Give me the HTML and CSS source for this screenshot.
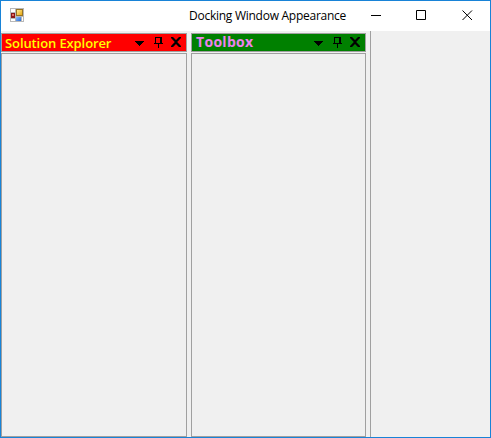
FILE: index.html
```html
<!DOCTYPE html>
<html lang="en">
<head>
<meta charset="utf-8">
<title>Docking Window Appearance</title>
<link rel="stylesheet" href="styles.css">
</head>
<body>
<svg class="defs" width="0" height="0">
  <symbol id="caret" viewBox="0 0 9 5"><path d="M0 0h9v1H8v1H7v1H6v1H5v1H4V4H3V3H2V2H1V1H0z"/></symbol>
  <symbol id="pin" viewBox="0 0 9 11"><path fill-rule="evenodd" d="M1 0h7v6h1v1H5v4H4V7H0V6h1zM2 1v5h4V1z"/></symbol>
  <symbol id="cross" viewBox="0 0 10 10"><path d="M0 0h2l3 3 3-3h2v1L6.200 5 10 9v1H8L5 7l-3 3H0V9l3.800-4L0 1z"/></symbol>
</svg>
<div class="window">
  <header class="titlebar">
    <svg class="app-icon" width="14" height="14" shape-rendering="crispEdges">
      <defs>
        <linearGradient id="gold" x2="1" y2="1"><stop stop-color="#ffeb93"/><stop offset="1" stop-color="#e6a712"/></linearGradient>
        <linearGradient id="blue" x2="1" y2="1"><stop stop-color="#8dbcfa"/><stop offset="1" stop-color="#286bd5"/></linearGradient>
      </defs>
      <path fill="#b8b8b8" d="M0 0h14v14H0z"/>
      <path fill="#fff" d="M1 1h4v3H1zM1 11h4v2H1zM12 9h1v4h-1z"/>
      <path fill="#977323" d="M6 1h7v7H6z"/><path fill="url(#gold)" d="M7 2h5v5H7z"/>
      <path fill="#8a1717" d="M1 5h4v5H1z"/><path fill="#e06b63" d="M2 6h2v2H2z"/>
      <path fill="url(#blue)" d="M6 9h5v4H6z"/>
    </svg>
    <h1 class="caption">Docking Window Appearance</h1>
    <svg class="controls" width="104" height="12" fill="none" stroke="#000">
      <path d="M0 5.500h10M45.500 .5h9v9h-9z"/>
      <path d="M91.500 .5l9.500 9.500M101 .5L91.500 10"/>
    </svg>
  </header>
  <main class="workspace">
    <section class="dock explorer">
      <div class="dock-head"><h2>Solution Explorer</h2>
        <svg class="caret" width="9" height="5"><use href="#caret"/></svg>
        <svg class="pin" width="9" height="11"><use href="#pin"/></svg>
        <svg class="cross" width="10" height="10"><use href="#cross"/></svg>
      </div>
      <div class="dock-body"></div>
    </section>
    <section class="dock toolbox">
      <div class="dock-head"><h2>Toolbox</h2>
        <svg class="caret" width="9" height="5"><use href="#caret"/></svg>
        <svg class="pin" width="9" height="11"><use href="#pin"/></svg>
        <svg class="cross" width="10" height="10"><use href="#cross"/></svg>
      </div>
      <div class="dock-body"></div>
    </section>
    <div class="splitter"></div>
    <div class="client"></div>
  </main>
</div>
</body>
</html>
```
FILE: styles.css
```css
* { box-sizing: border-box; }
body { margin: 0; }
h1, h2 { margin: 0; white-space: nowrap; }
.defs { display: none; }
.window {
  width: 491px;
  height: 438px;
  border: 1px solid #1883d7;
  background: #f0f0f0;
  display: flex;
  flex-direction: column;
}
.titlebar {
  height: 30px;
  flex: none;
  display: flex;
  align-items: flex-start;
  background: #fff;
  padding-left: 9px;
}
.app-icon { margin-top: 7px; flex: none; }
.caption {
  margin: 6px 0 0 165px;
  width: 182px;
  flex: none;
  font: 400 12px/18px "Open Sans", sans-serif;
  letter-spacing: -0.26px;
  color: #000;
}
.controls { margin-top: 9px; flex: none; }
.workspace { flex: 1; display: flex; }
.dock { display: flex; flex-direction: column; gap: 1px; flex: none; padding-top: 2px; }
.explorer { width: 186px; margin-right: 4px; }
.toolbox { width: 175px; margin-right: 4px; }
.dock-head {
  height: 19px;
  border: 1px solid #a0a0a0;
  display: flex;
  align-items: flex-start;
  padding-right: 4px;
}
.dock-head svg { flex: none; }
.dock-body { flex: 1; border: 1px solid #a0a0a0; }
.explorer .dock-head { background: #f00; padding-left: 3px; }
.toolbox .dock-head { background: #008000; padding-left: 4px; }
h2 { flex: 1; }
.explorer h2 {
  font: 600 13px/18px "Open Sans", sans-serif;
  letter-spacing: -0.1px;
  color: #ff0;
}
.toolbox h2 {
  font: 700 14px/16px "Open Sans", sans-serif;
  letter-spacing: 0.3px;
  color: #ee82ee;
}
.caret { margin: 7px 10px 0 0; }
.pin { margin: 3px 8px 0 0; }
.cross { margin: 3px 1px 0 0; }
.splitter { flex: none; width: 1px; background: #a0a0a0; }
.client { flex: 1; }
```
